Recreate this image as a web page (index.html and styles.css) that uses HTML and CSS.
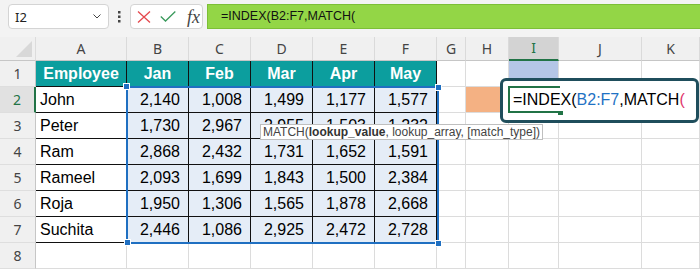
FILE: index.html
```html
<!doctype html>
<html>
  <head>
    <title>INDEX MATCH</title>
    <link rel="stylesheet" href="styles.css">
  </head>
  <body>
    <div class="toolbar">
      <div class="namebox">
        <span>I2</span>
        <svg width="8" height="5" viewBox="0 0 8 5"><path d="M0.5 0.5 L4 4 L7.5 0.5" fill="none" stroke="#444" stroke-width="1"/></svg>
      </div>
      <div class="dots">
        <svg width="3" height="12" viewBox="0 0 3 12"><rect x="0" y="0" width="2.5" height="2.5" fill="#444"/><rect x="0" y="4.5" width="2.5" height="2.5" fill="#444"/><rect x="0" y="9" width="2.5" height="2.5" fill="#444"/></svg>
      </div>
      <div class="fxbox">
        <svg class="cancel" width="14" height="12" viewBox="0 0 14 12"><path d="M1 0.5 L13 11.5 M13 0.5 L1 11.5" stroke="#e5484d" stroke-width="1.3" fill="none"/></svg>
        <svg class="enter" width="16" height="11" viewBox="0 0 16 11"><path d="M0.8 5.5 L5.5 10 L15.3 0.5" stroke="#3a9a5c" stroke-width="1.3" fill="none"/></svg>
        <span class="fx">fx</span>
      </div>
      <div class="formula">=INDEX(B2:F7,MATCH(</div>
    </div>

    <div class="sheet">
      <div class="corner"></div>
      <div class="hd">A</div>
      <div class="hd">B</div>
      <div class="hd">C</div>
      <div class="hd">D</div>
      <div class="hd">E</div>
      <div class="hd">F</div>
      <div class="hd">G</div>
      <div class="hd">H</div>
      <div class="hd active">I</div>
      <div class="hd">J</div>
      <div class="hd">K</div>

      <div class="rh">1</div>
      <div class="th">Employee</div>
      <div class="th">Jan</div>
      <div class="th">Feb</div>
      <div class="th">Mar</div>
      <div class="th">Apr</div>
      <div class="th">May</div>
      <div class="c"></div>
      <div class="c"></div>
      <div class="c ref"></div>
      <div class="c"></div>
      <div class="c"></div>

      <div class="rh active">2</div>
      <div class="t">John</div>
      <div class="t n">2,140</div>
      <div class="t n">1,008</div>
      <div class="t n">1,499</div>
      <div class="t n">1,177</div>
      <div class="t n">1,577</div>
      <div class="c"></div>
      <div class="c hint"></div>
      <div class="c"></div>
      <div class="c"></div>
      <div class="c"></div>

      <div class="rh">3</div>
      <div class="t">Peter</div>
      <div class="t n">1,730</div>
      <div class="t n">2,967</div>
      <div class="t n">2,955</div>
      <div class="t n">1,503</div>
      <div class="t n">1,232</div>
      <div class="c"></div>
      <div class="c"></div>
      <div class="c"></div>
      <div class="c"></div>
      <div class="c"></div>

      <div class="rh">4</div>
      <div class="t">Ram</div>
      <div class="t n">2,868</div>
      <div class="t n">2,432</div>
      <div class="t n">1,731</div>
      <div class="t n">1,652</div>
      <div class="t n">1,591</div>
      <div class="c"></div>
      <div class="c"></div>
      <div class="c"></div>
      <div class="c"></div>
      <div class="c"></div>

      <div class="rh">5</div>
      <div class="t">Rameel</div>
      <div class="t n">2,093</div>
      <div class="t n">1,699</div>
      <div class="t n">1,843</div>
      <div class="t n">1,500</div>
      <div class="t n">2,384</div>
      <div class="c"></div>
      <div class="c"></div>
      <div class="c"></div>
      <div class="c"></div>
      <div class="c"></div>

      <div class="rh">6</div>
      <div class="t">Roja</div>
      <div class="t n">1,950</div>
      <div class="t n">1,306</div>
      <div class="t n">1,565</div>
      <div class="t n">1,878</div>
      <div class="t n">2,668</div>
      <div class="c"></div>
      <div class="c"></div>
      <div class="c"></div>
      <div class="c"></div>
      <div class="c"></div>

      <div class="rh">7</div>
      <div class="t">Suchita</div>
      <div class="t n">2,446</div>
      <div class="t n">1,086</div>
      <div class="t n">2,925</div>
      <div class="t n">2,472</div>
      <div class="t n">2,728</div>
      <div class="c"></div>
      <div class="c"></div>
      <div class="c"></div>
      <div class="c"></div>
      <div class="c"></div>

      <div class="rh">8</div>
      <div class="c"></div>
      <div class="c"></div>
      <div class="c"></div>
      <div class="c"></div>
      <div class="c"></div>
      <div class="c"></div>
      <div class="c"></div>
      <div class="c"></div>
      <div class="c"></div>
      <div class="c"></div>
      <div class="c"></div>

      <!-- range B2:F7 picked up by the formula -->
      <section class="selection">
        <span class="handle tl"></span>
        <span class="handle tr"></span>
        <span class="handle bl"></span>
        <span class="handle br"></span>
      </section>

      <section class="tip">MATCH(<b>lookup_value</b>, lookup_array, [match_type])</section>

      <section class="editor">
        <div class="cell-frame"><span class="fill"></span></div>
        <div class="editor-text">=INDEX(<span class="ref-text">B2:F7</span>,MATCH<span class="paren">(</span></div>
      </section>
    </div>
  </body>
</html>
```

FILE: styles.css
```css
* {
  box-sizing: border-box;
}
body {
  margin: 0;
  width: 700px;
  height: 271px;
  overflow: hidden;
  background: #fff;
  font-family: "Liberation Sans", Arial, sans-serif;
  color: #000;
}

/* formula bar */
.toolbar {
  display: flex;
  align-items: flex-start;
  height: 37px;
  padding-top: 4px;
  background: #f3f3f3;
}
.namebox {
  display: flex;
  align-items: center;
  justify-content: space-between;
  width: 101px;
  height: 25px;
  margin-left: 8px;
  padding: 0 7px 0 6px;
  background: #fff;
  border: 1px solid #d4d4d4;
  border-radius: 4px;
  font-family: "Noto Sans", sans-serif;
  font-size: 13px;
  color: #222;
}
.dots {
  display: flex;
  justify-content: center;
  align-items: center;
  width: 21px;
  height: 25px;
}
.fxbox {
  display: flex;
  align-items: center;
  width: 73px;
  height: 25px;
  padding-left: 6px;
  background: #fff;
  border: 1px solid #d4d4d4;
  border-radius: 4px;
}
.cancel {
  margin-right: 9px;
}
.enter {
  margin-right: 11px;
}
.fx {
  font-family: "Liberation Serif", serif;
  font-style: italic;
  font-size: 18px;
  color: #444;
  line-height: 20px;
}
.formula {
  flex: 1;
  height: 25px;
  margin-left: 4px;
  padding-left: 13px;
  background: #93d646;
  border: 1px solid #7cbf36;
  border-right: none;
  font-size: 12.5px;
  line-height: 23px;
  color: #111;
}

/* grid */
.sheet {
  position: relative;
  display: grid;
  grid-template-columns: 36px 91px 62px 62px 62px 62px 62px 29px 43px 50px 83px 1fr;
  grid-template-rows: 24px repeat(8, 26px);
}
.sheet > div {
  border-right: 1px solid #dcdcdc;
  border-bottom: 1px solid #dcdcdc;
  font-size: 16px;
  line-height: 25px;
  white-space: nowrap;
}
.sheet > .corner {
  position: relative;
  background: #f0f0f0;
  border-bottom-color: #c6c6c6;
}
.corner::after {
  content: "";
  position: absolute;
  right: 3px;
  bottom: 3px;
  border-left: 16px solid transparent;
  border-bottom: 16px solid #d8d8d8;
}
.sheet > .hd {
  background: #f0f0f0;
  border-bottom-color: #c6c6c6;
  border-right-color: #dadada;
  text-align: center;
  font-family: "Noto Sans", sans-serif;
  font-size: 14px;
  line-height: 24px;
  color: #444;
}
.sheet > .hd.active {
  background: #d3d3d3;
  border-bottom: 2px solid #217346;
  color: #217346;
  line-height: 22px;
}
.sheet > .rh {
  background: #f0f0f0;
  border-right-color: #c6c6c6;
  border-bottom-color: #dedede;
  text-align: center;
  font-family: "Noto Sans", sans-serif;
  font-size: 14px;
  color: #444;
}
.sheet > .rh.active {
  background: #e1e1e1;
  border-right: 2px solid #217346;
  color: #217346;
}
.sheet > .th {
  background: #0c9e9e;
  border-right-color: #111;
  border-bottom-color: #111;
  color: #fff;
  font-weight: bold;
  text-align: center;
}
.sheet > .th:first-of-type {
  text-align: left;
  padding-left: 4px;
}
.sheet > .t {
  border-right-color: #111;
  border-bottom-color: #111;
  padding-left: 4px;
}
.sheet > .n {
  background: #e5edf7;
  text-align: right;
  padding-right: 8px;
}
.sheet > .ref {
  background: #b4c6e7;
}
.sheet > .hint {
  background: #f4b183;
}

/* overlays */
.selection {
  position: absolute;
  left: 126px;
  top: 49px;
  width: 313px;
  height: 158px;
  border: 2px solid #1f6fc1;
}
.handle {
  position: absolute;
  width: 7px;
  height: 7px;
  background: #1f6fc1;
  border: 1px solid #fff;
}
.handle.tl { left: -5px; top: -5px; }
.handle.tr { right: -5px; top: -4px; }
.handle.bl { left: -4px; bottom: -4px; }
.handle.br { right: -5px; bottom: -5px; }

.tip {
  position: absolute;
  left: 260px;
  top: 87px;
  height: 16px;
  padding: 0 2px;
  background: #fff;
  border: 1px solid #bfbfbf;
  font-size: 12px;
  line-height: 14px;
  color: #444;
  white-space: nowrap;
}
.tip b {
  color: #333;
}

.editor {
  position: absolute;
  left: 500px;
  top: 41px;
  width: 199px;
  height: 45px;
  background: #fff;
  border: 3px solid #1f4e5c;
  border-radius: 6px;
}
.cell-frame {
  position: absolute;
  left: 5px;
  top: 5px;
  width: 52px;
  height: 27px;
  border: 2px solid #217346;
  border-right: none;
}
.fill {
  position: absolute;
  right: -3px;
  bottom: -4px;
  width: 5px;
  height: 4px;
  background: #217346;
}
.editor-text {
  position: relative;
  padding: 6px 0 0 10px;
  font-size: 16px;
  line-height: 26px;
  white-space: nowrap;
}
.ref-text {
  color: #1f72c4;
}
.paren {
  color: #e0356b;
}
```
